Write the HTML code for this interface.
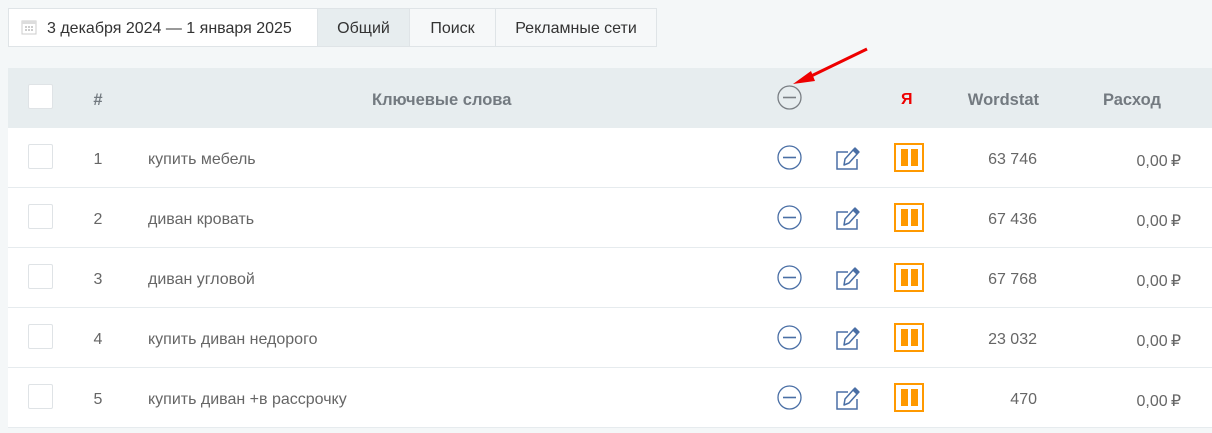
<!DOCTYPE html>
<html><head><meta charset="utf-8"><style>
*{box-sizing:border-box;margin:0;padding:0}
body{width:1212px;height:433px;background:#f4f7f8;font-family:"Liberation Sans",sans-serif;font-size:16px;color:#666;position:relative;overflow:hidden}
.top{position:absolute;left:8px;top:8px;height:39px;display:flex}
.top div{border:1px solid #dfe4e7;height:39px;line-height:39px;color:#333;background:#f6f8f9;margin-left:-1px;text-align:center}
.tbl{position:absolute;left:8px;top:68px;width:1204px}
.row{height:60px;position:relative;background:#fff;border-bottom:1px solid #e6ebee}
.hdr{background:#e7edef;border:none}
.row>*{position:absolute}
.cb{left:20px;top:16px;width:25px;height:25px;border:1px solid #dfe3e6;border-radius:2px;background:#fff}
.num{left:70px;width:40px;text-align:center;top:23px}
.kw{left:140px;top:23px}
.hdr .num,.hdr .kw,.hdr .ws,.hdr .rs{font-weight:bold;color:#737a80;font-size:16.5px}
.ws{right:175px;top:23px;text-align:right}
.rs{right:31px;top:23px;text-align:right}
.minus{left:769px;top:17px}
.edit{left:826px;top:15px}
.pause{left:886px;top:15px;width:30px;height:29px;border:2px solid #f90;}
.pause:before,.pause:after{content:"";position:absolute;top:4px;width:7px;height:17px;background:#f90}
.pause:before{left:5px}.pause:after{left:15px}
</style></head><body>
<div class="top">
<div style="width:310px;background:#fff;margin-left:0;text-align:left;padding-left:12px"><svg width="16" height="16" style="vertical-align:-2px;margin-right:10px"><rect x="1" y="2" width="14" height="13" fill="none" stroke="#ccc"/><rect x="1" y="2" width="14" height="3" fill="#ddd"/><g fill="#ccc"><rect x="4" y="7" width="2" height="2"/><rect x="7" y="7" width="2" height="2"/><rect x="10" y="7" width="2" height="2"/><rect x="4" y="10" width="2" height="2"/><rect x="7" y="10" width="2" height="2"/><rect x="10" y="10" width="2" height="2"/></g></svg>3 декабря 2024 — 1 января 2025</div>
<div style="width:93px;background:#e7edef">Общий</div>
<div style="width:87px">Поиск</div>
<div style="width:162px">Рекламные сети</div>
</div>
<div class="tbl">
<div class="row hdr"><div class="cb"></div><div class="num">#</div><div class="kw" style="left:364px">Ключевые слова</div>
<svg class="minus" width="25" height="25"><circle cx="12.5" cy="12.5" r="11.5" fill="none" stroke="#7a7f84" stroke-width="1.3"/><line x1="6" y1="12.5" x2="19" y2="12.5" stroke="#7a7f84" stroke-width="1.6"/></svg>
<div style="left:893px;top:23px;color:#e00;font-weight:bold">Я</div>
<div class="ws" style="right:173px">Wordstat</div><div class="rs" style="right:51px">Расход</div>
<svg style="left:783px;top:-22px" width="80" height="40"><line x1="76" y1="3" x2="14" y2="33" stroke="#e00" stroke-width="3"/><polygon points="2,38 20,25 24,35" fill="#e00"/></svg>
</div>
<div class="row"><div class="cb"></div><div class="num">1</div><div class="kw">купить мебель</div>
<svg class="minus" width="25" height="25"><circle cx="12.5" cy="12.5" r="11.5" fill="none" stroke="#4a6fa5" stroke-width="1.3"/><line x1="6" y1="12.5" x2="19" y2="12.5" stroke="#4a6fa5" stroke-width="1.6"/></svg>
<svg class="edit" width="28" height="30"><path d="M14 9H3v17h20V16" fill="none" stroke="#4a6fa5" stroke-width="1.5"/><path d="M10 22l1-6 9-10 4 4-9 10z M19 7l4 4 2-2-4-4z" fill="none" stroke="#4a6fa5" stroke-width="1.5" stroke-linejoin="round"/></svg>
<div class="pause"></div><div class="ws">63 746</div><div class="rs">0,00&#8239;₽</div></div>
<div class="row"><div class="cb"></div><div class="num">2</div><div class="kw">диван кровать</div>
<svg class="minus" width="25" height="25"><circle cx="12.5" cy="12.5" r="11.5" fill="none" stroke="#4a6fa5" stroke-width="1.3"/><line x1="6" y1="12.5" x2="19" y2="12.5" stroke="#4a6fa5" stroke-width="1.6"/></svg>
<svg class="edit" width="28" height="30"><path d="M14 9H3v17h20V16" fill="none" stroke="#4a6fa5" stroke-width="1.5"/><path d="M10 22l1-6 9-10 4 4-9 10z M19 7l4 4 2-2-4-4z" fill="none" stroke="#4a6fa5" stroke-width="1.5" stroke-linejoin="round"/></svg>
<div class="pause"></div><div class="ws">67 436</div><div class="rs">0,00&#8239;₽</div></div>
<div class="row"><div class="cb"></div><div class="num">3</div><div class="kw">диван угловой</div>
<svg class="minus" width="25" height="25"><circle cx="12.5" cy="12.5" r="11.5" fill="none" stroke="#4a6fa5" stroke-width="1.3"/><line x1="6" y1="12.5" x2="19" y2="12.5" stroke="#4a6fa5" stroke-width="1.6"/></svg>
<svg class="edit" width="28" height="30"><path d="M14 9H3v17h20V16" fill="none" stroke="#4a6fa5" stroke-width="1.5"/><path d="M10 22l1-6 9-10 4 4-9 10z M19 7l4 4 2-2-4-4z" fill="none" stroke="#4a6fa5" stroke-width="1.5" stroke-linejoin="round"/></svg>
<div class="pause"></div><div class="ws">67 768</div><div class="rs">0,00&#8239;₽</div></div>
<div class="row"><div class="cb"></div><div class="num">4</div><div class="kw">купить диван недорого</div>
<svg class="minus" width="25" height="25"><circle cx="12.5" cy="12.5" r="11.5" fill="none" stroke="#4a6fa5" stroke-width="1.3"/><line x1="6" y1="12.5" x2="19" y2="12.5" stroke="#4a6fa5" stroke-width="1.6"/></svg>
<svg class="edit" width="28" height="30"><path d="M14 9H3v17h20V16" fill="none" stroke="#4a6fa5" stroke-width="1.5"/><path d="M10 22l1-6 9-10 4 4-9 10z M19 7l4 4 2-2-4-4z" fill="none" stroke="#4a6fa5" stroke-width="1.5" stroke-linejoin="round"/></svg>
<div class="pause"></div><div class="ws">23 032</div><div class="rs">0,00&#8239;₽</div></div>
<div class="row"><div class="cb"></div><div class="num">5</div><div class="kw">купить диван +в рассрочку</div>
<svg class="minus" width="25" height="25"><circle cx="12.5" cy="12.5" r="11.5" fill="none" stroke="#4a6fa5" stroke-width="1.3"/><line x1="6" y1="12.5" x2="19" y2="12.5" stroke="#4a6fa5" stroke-width="1.6"/></svg>
<svg class="edit" width="28" height="30"><path d="M14 9H3v17h20V16" fill="none" stroke="#4a6fa5" stroke-width="1.5"/><path d="M10 22l1-6 9-10 4 4-9 10z M19 7l4 4 2-2-4-4z" fill="none" stroke="#4a6fa5" stroke-width="1.5" stroke-linejoin="round"/></svg>
<div class="pause"></div><div class="ws">470</div><div class="rs">0,00&#8239;₽</div></div>
</div>
</body></html>
